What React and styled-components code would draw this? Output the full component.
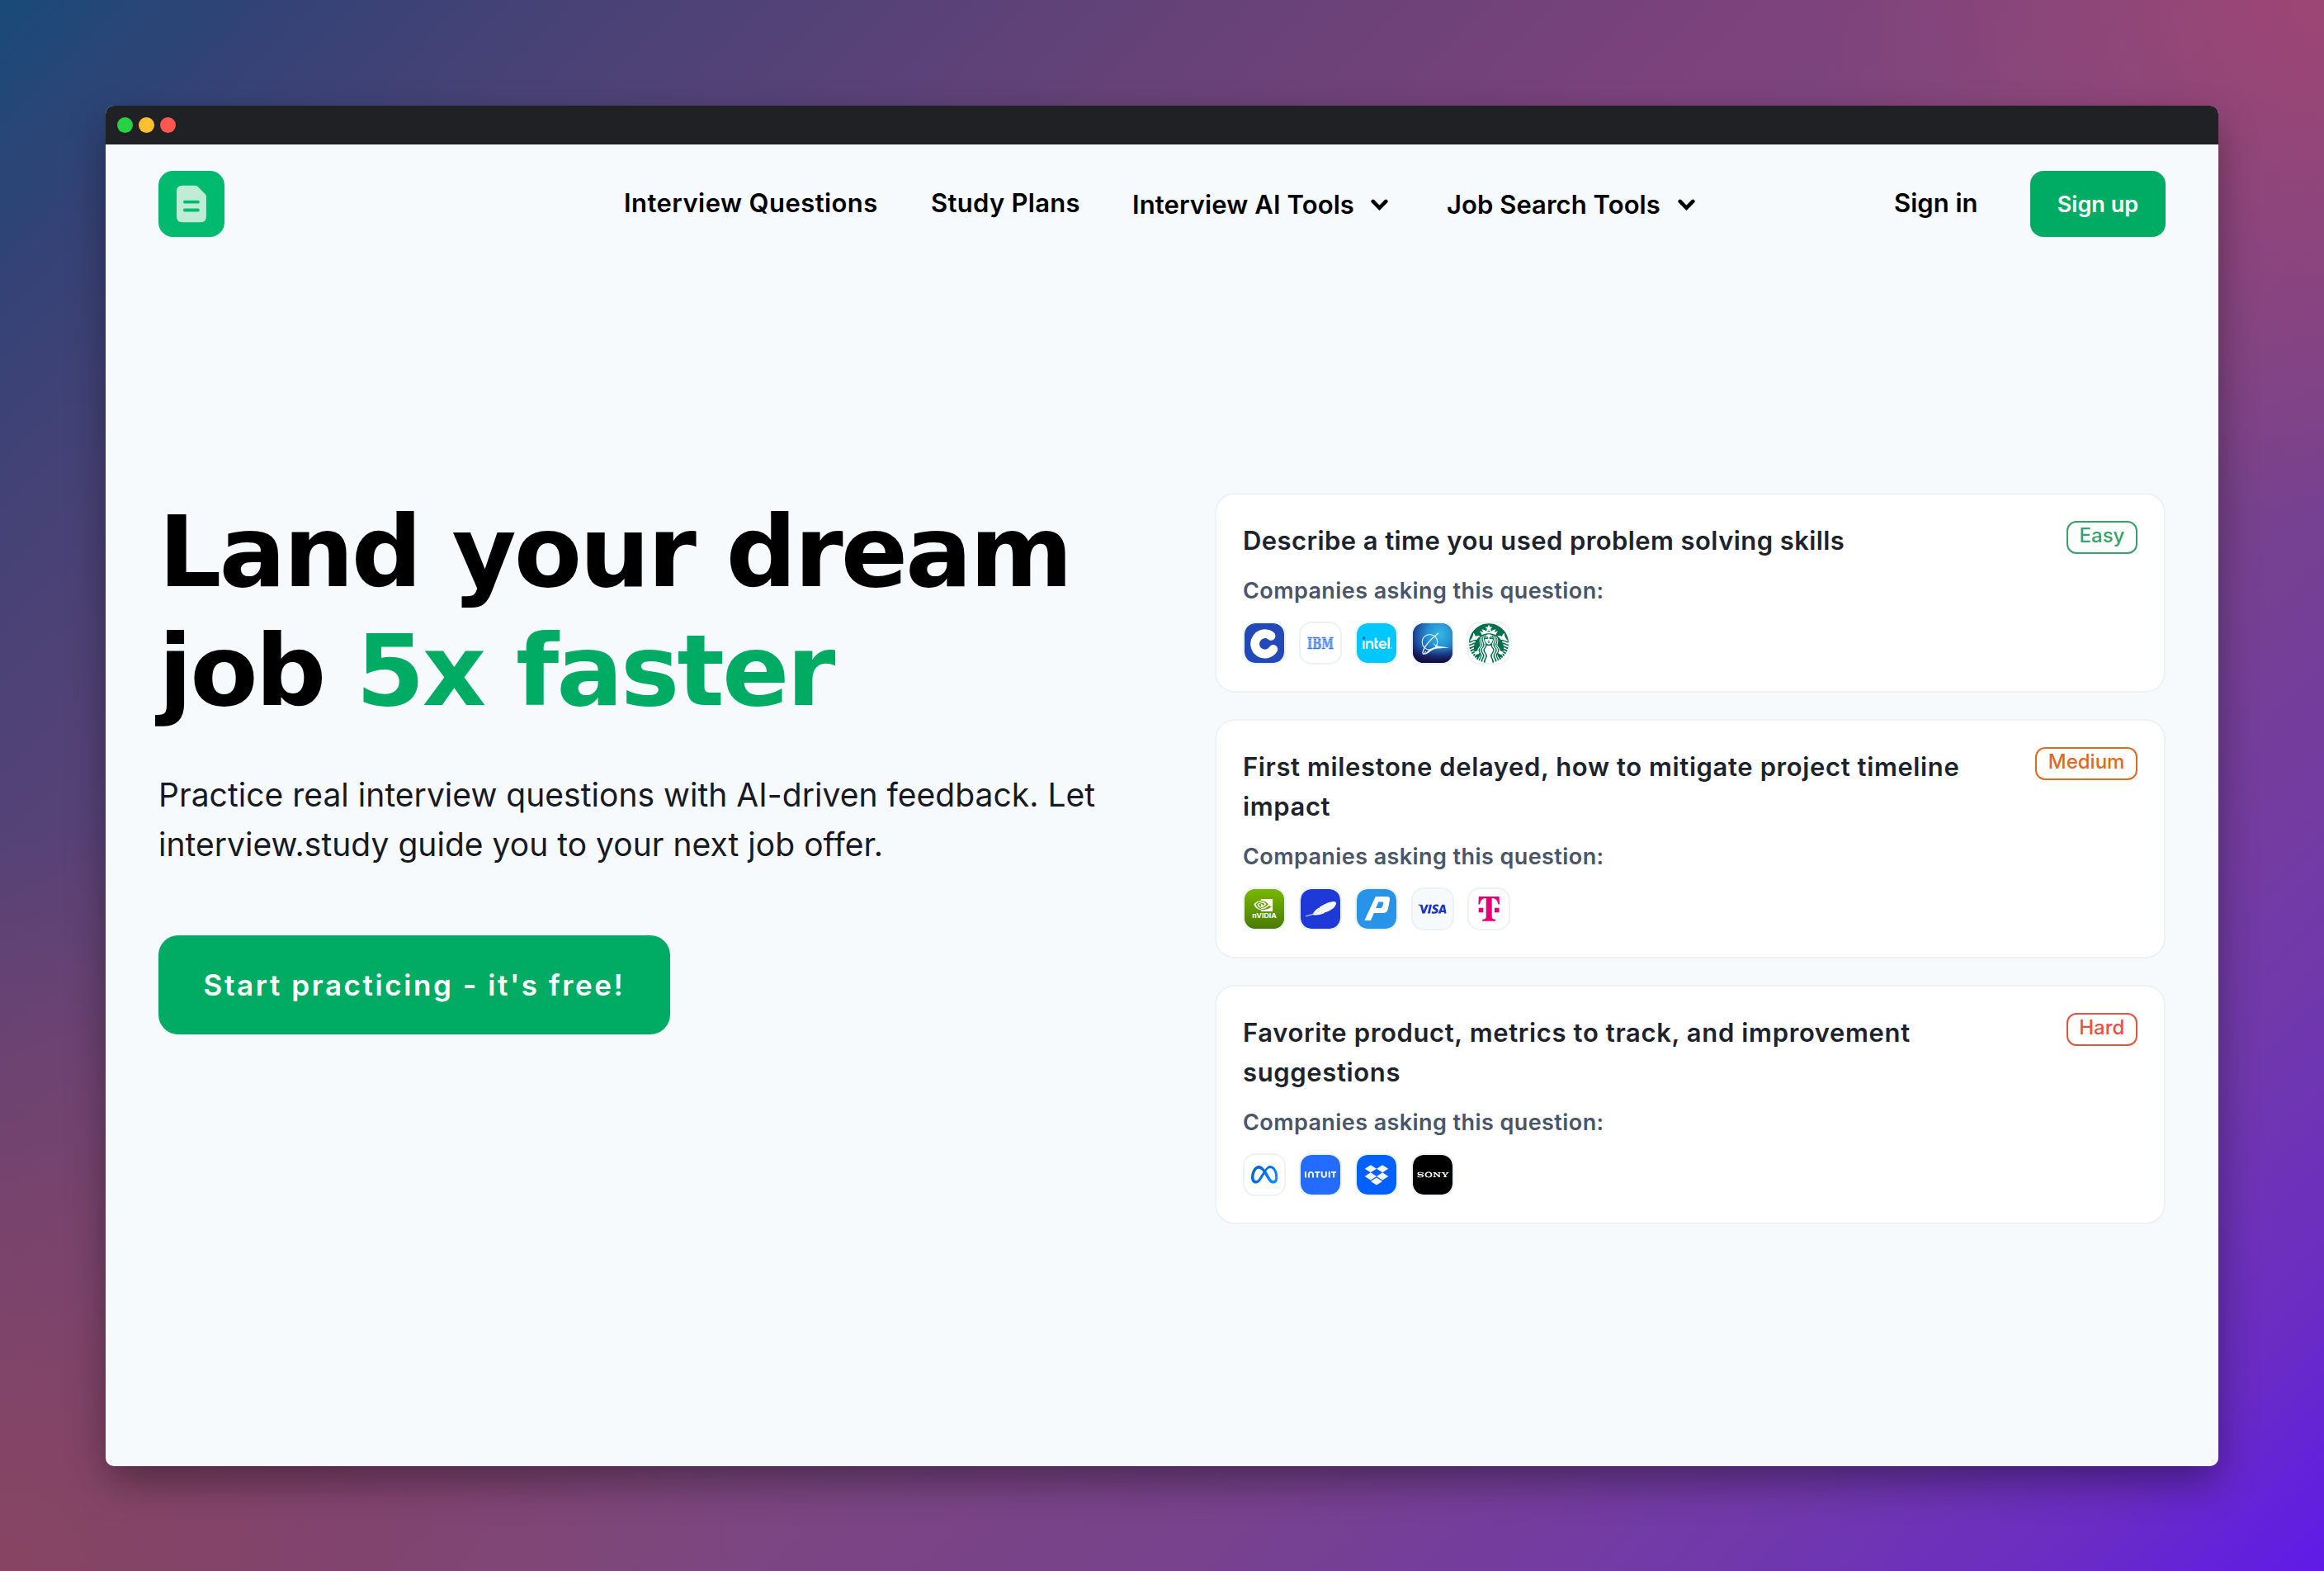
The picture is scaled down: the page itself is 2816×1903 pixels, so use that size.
import React from "react";
import styled, { createGlobalStyle } from "styled-components";
import {
  SiIntel,
  SiStarbucks,
  SiNvidia,
  SiVisa,
  SiMeta,
  SiIntuit,
  SiDropbox,
  SiSony,
} from "react-icons/si";

const GlobalStyle = createGlobalStyle`
  *, *::before, *::after { box-sizing: border-box; }
  body {
    margin: 0;
    font-family: "Inter", "Liberation Sans", sans-serif;
    color: #000;
  }
  h1, h2, p { margin: 0; }
  svg { display: block; }
`;

const Backdrop = styled.div`
  height: 1903px;
  padding: 128px;
  background:
    radial-gradient(circle at 100% 0%, #9d4674 0%, rgba(157, 70, 116, 0) 620px),
    radial-gradient(circle at 0% 100%, #874562 0%, rgba(135, 69, 98, 0) 900px),
    linear-gradient(
      135deg,
      #194a78 0%,
      #364276 8%,
      #484276 15%,
      #644278 30%,
      #7c427c 45%,
      #7c477e 55%,
      #78428c 70%,
      #7038ac 85%,
      #6a2cc4 93%,
      #5f1ae9 100%
    );
`;

const Window = styled.div`
  display: flex;
  flex-direction: column;
  height: 1648px;
  border-radius: 10px;
  overflow: hidden;
  background: #f6fafd;
  box-shadow: 0 20px 50px -4px rgba(0, 0, 0, 0.42);
`;

const TitleBar = styled.div`
  display: flex;
  align-items: center;
  gap: 7px;
  height: 47px;
  padding-left: 14px;
  background: #202124;
`;

const Dot = styled.span`
  width: 19px;
  height: 19px;
  border-radius: 50%;
  background: ${(p) => p.$color};
`;

const Header = styled.header`
  display: flex;
  align-items: center;
  height: 144px;
  padding: 0 64px;
`;

const Brand = styled.a`
  width: 564px;
`;

const Nav = styled.nav`
  display: flex;
  align-items: center;
  gap: 64px;
`;

const NavLink = styled.a`
  width: ${(p) => p.$width}px;
  padding-bottom: 2px;
  font-size: 31px;
  font-weight: 600;
  line-height: 48px;
  letter-spacing: ${(p) => p.$track}px;
  white-space: nowrap;
`;

const NavMenu = styled(NavLink)`
  display: flex;
  align-items: center;
  justify-content: space-between;
  padding: 1px 7px 0 0;
`;

const Account = styled.div`
  display: flex;
  align-items: center;
  gap: 64px;
  margin-left: auto;
`;

const SignUp = styled.button`
  width: 164px;
  height: 80px;
  padding: 0;
  border: 0;
  border-radius: 16px;
  background: #00ac63;
  color: #fff;
  font: 600 27px "Inter", sans-serif;
  letter-spacing: 0.05px;
`;

const Hero = styled.main`
  display: grid;
  grid-template-columns: 1152px 1152px;
  gap: 128px;
  align-items: start;
  padding: 278px 64px 0;
`;

const Headline = styled.h1`
  font: bold 120px/144px "DejaVu Sans", sans-serif;
  letter-spacing: -3px;
`;

const Accent = styled.span`
  color: #00ac63;
`;

const Lead = styled.p`
  margin-top: 48px;
  color: #171923;
  font-size: 39px;
  line-height: 60px;
  letter-spacing: 0.03px;
`;

const CallToAction = styled.button`
  width: 620px;
  height: 120px;
  margin-top: 80px;
  padding: 0;
  border: 0;
  border-radius: 24px;
  background: #00ac63;
  color: #fff;
  font: 600 35px "Inter", sans-serif;
  letter-spacing: 2.6px;
`;

const Questions = styled.section`
  display: flex;
  flex-direction: column;
  gap: 32px;
`;

const Card = styled.article`
  display: flex;
  align-items: flex-start;
  justify-content: space-between;
  padding: 32px;
  border: 2px solid #edf2f7;
  border-radius: 24px;
  background: #fff;
`;

const Question = styled.h2`
  color: #1d232d;
  font-size: 31px;
  font-weight: 600;
  line-height: 48px;
  letter-spacing: ${(p) => p.$track}px;
`;

const Asking = styled.p`
  margin: 16px 0;
  color: #4a5568;
  font-size: 27px;
  font-weight: 600;
  line-height: 42px;
  letter-spacing: 0.42px;
`;

const Companies = styled.div`
  display: flex;
  gap: 16px;
`;

const Tile = styled.div`
  width: 52px;
  height: 52px;
  border: 2px solid #edf2f7;
  border-radius: 15px;
  overflow: hidden;
  background: ${(p) => p.$bg};
  background-clip: padding-box;
`;

const Badge = styled.span`
  height: 40px;
  padding: 0 13.6px;
  border: 2px solid ${(p) => p.$color};
  border-radius: 12px;
  color: ${(p) => p.$color};
  font-size: 24px;
  font-weight: 500;
  line-height: 31px;
`;

function Logo() {
  return (
    <svg width="80" height="80" viewBox="0 0 80 80">
      <rect width="80" height="80" rx="17.5" fill="#00bb6f" />
      <path
        d="M29 17.8h15.5q2 0 3.4 1.4l8.6 8.8q1.4 1.4 1.4 3.4V55.3q0 7-7 7H29q-7 0-7-7V24.8q0-7 7-7z"
        fill="#bfecd5"
      />
      <path d="M31.9 37.7H47.9M31.9 47.5H47.9" stroke="#00bb6f" strokeWidth="3.8" strokeLinecap="round" />
    </svg>
  );
}

function Chevron() {
  return (
    <svg width="21" height="14" viewBox="0 0 21 14">
      <path d="M2.7 2.9l7.8 7.9 7.8-7.9" fill="none" stroke="#000" strokeWidth="4.6" strokeLinecap="round" />
    </svg>
  );
}

const C = () => (
  <path d="M32 15.3A12 12.2 0 1 0 34.8 31.4" fill="none" stroke="#fff" strokeWidth="10.8" strokeLinecap="round" />
);

const Ibm = () => (
  <>
    <text x="24" y="20.9" transform="scale(1 1.46)" textAnchor="middle" fontFamily="DejaVu Serif" fontWeight="bold" fontSize="13.2" fill="#3a76e0" stroke="#3a76e0" strokeWidth=".5">
      IBM
    </text>
    <path d="M7 18.6h34M7 20.7h34M7 22.8h34M7 24.9h34M7 27h34M7 29.1h34" stroke="#fff" strokeWidth=".5" />
  </>
);

const Intel = () => (
  <>
    <SiIntel x="7" y="6" size="36" color="#fff" />
    <path d="M7 16.6h3.2v3.2H7z" fill="#0068b5" />
  </>
);

const Boeing = () => (
  <>
    <defs>
      <radialGradient id="sky" cx=".68" cy=".28" r=".85">
        <stop offset="0" stopColor="#35b8e6" />
        <stop offset=".38" stopColor="#2590d0" />
        <stop offset=".7" stopColor="#1f4fa2" />
        <stop offset="1" stopColor="#15144e" />
      </radialGradient>
      <linearGradient id="dusk" x1="0" y1="0" x2="0" y2="1">
        <stop offset=".6" stopColor="#14104a" stopOpacity="0" />
        <stop offset="1" stopColor="#120c40" />
      </linearGradient>
    </defs>
    <rect width="48" height="48" fill="url(#sky)" />
    <rect width="48" height="48" fill="url(#dusk)" />
    <g fill="none" stroke="#e6f4fb" strokeLinecap="round">
      <circle cx="20.5" cy="22.8" r="9.3" strokeWidth="1.1" />
      <path d="M30.5 12.3C22 18.5 13 28.5 12 35.3c-.4 2.7 2.3 2.3 3.5-1" strokeWidth="1.3" />
    </g>
    <path d="M13 37.8c3.5-.6 4.2-5.5 12-8.2l3-1.1-3.8-4.8c2.5 1.7 4.2 3.6 6.8 4.1l13 1.8-14.5 1c-8.5 1-10.5 7.6-16.5 7.2z" fill="#f2fafd" />
  </>
);

const Starbucks = () => <SiStarbucks size="48" color="#00704a" />;

const Nvidia = () => (
  <>
    <defs>
      <linearGradient id="moss" x1="0" y1="0" x2="0" y2="1">
        <stop offset="0" stopColor="#78b800" />
        <stop offset="1" stopColor="#4b7a00" />
      </linearGradient>
    </defs>
    <rect width="48" height="48" fill="url(#moss)" />
    <SiNvidia x="11.3" y="8" size="23" color="#fff" />
    <text x="9.3" y="35.4" fontFamily="Inter" fontWeight="700" fontSize="8" fill="#fff" textLength="29.5" lengthAdjust="spacingAndGlyphs">
      nVIDIA
    </text>
  </>
);

const Feather = () => (
  <>
    <path
      d="M14.5 31c1.2-3.6 4-6.3 7.4-8.6l.6.7.7-1.6c5-3.3 11-6.3 17.3-6.6 2 0 2.9 1.3 2.3 3.4-.7 2.6-2.6 4.6-4.9 6.1l-1.5.1.4.8c-2 1.2-4.3 2.1-6.5 3l-1.3-.2v.9c-4.6 1.7-9.5 3.4-14.5 2z"
      fill="#f6f8ff"
    />
    <path d="M6.5 32.8C12 31.8 17 30 23 26.5" fill="none" stroke="#dfe5ff" strokeWidth="1.1" strokeLinecap="round" />
  </>
);

const Parking = () => (
  <path
    fillRule="evenodd"
    fill="#fff"
    d="M22.8 9H36.5q4.3 0 3.5 4L38 23.5Q36.9 29 31.5 29H20.8L17.6 36.8Q17.1 38 15.8 38H9.3ZM26.3 15.5 23.2 23H28.5Q30.5 23 31 21.2L32.3 17.2Q32.7 15.5 31 15.5Z"
  />
);

const Visa = () => <SiVisa x="5.7" y="6.6" size="35" color="#1c36cc" />;

const Telekom = () => (
  <path
    fill="#e20074"
    d="M11.8 9H36.6L37 18.6H35.4Q34.6 11 27.7 11V34Q27.7 36.5 32 36.7V38.7H16.3V36.7Q20.7 36.5 20.7 34V11Q13.8 11 13 18.6H11.4ZM11.7 22.7h5.6v5.6h-5.6ZM31 22.7h5.6v5.6H31Z"
  />
);

const Meta = () => (
  <>
    <defs>
      <linearGradient id="loop" x1="0" y1="0" x2="1" y2=".6">
        <stop offset="0" stopColor="#0064d8" />
        <stop offset=".5" stopColor="#0b6de2" />
        <stop offset="1" stopColor="#0a8bff" />
      </linearGradient>
    </defs>
    <SiMeta x="8" y="7.7" size="32.3" style={{ fill: "url(#loop)" }} />
  </>
);

const Intuit = () => <SiIntuit x="5" y="4.6" size="38.4" color="#fff" />;

const Dropbox = () => <SiDropbox x="9.7" y="10.1" size="28.6" color="#f5f3f0" />;

const Sony = () => <SiSony x="5.3" y="4.8" size="38.4" color="#fff" />;

const questions = [
  {
    title: "Describe a time you used problem solving skills",
    track: 0.415,
    level: "Easy",
    color: "#38a169",
    companies: [
      ["#2348b8", C],
      ["#fff", Ibm],
      ["#00c7fd", Intel],
      ["#1f4fa2", Boeing],
      ["#fff", Starbucks],
    ],
  },
  {
    title: (
      <>
        First milestone delayed, how to mitigate project timeline
        <br />
        impact
      </>
    ),
    track: 0.61,
    level: "Medium",
    color: "#dd6b20",
    companies: [
      ["#5f9800", Nvidia],
      ["#1f38d8", Feather],
      ["#2793e9", Parking],
      ["#f7fafc", Visa],
      ["#fff", Telekom],
    ],
  },
  {
    title: (
      <>
        Favorite product, metrics to track, and improvement
        <br />
        suggestions
      </>
    ),
    track: 0.64,
    level: "Hard",
    color: "#e5533f",
    companies: [
      ["#fff", Meta],
      ["#236cff", Intuit],
      ["#0061ff", Dropbox],
      ["#000", Sony],
    ],
  },
];

function QuestionCard({ title, track, level, color, companies }) {
  return (
    <Card>
      <div>
        <Question $track={track}>{title}</Question>
        <Asking>Companies asking this question:</Asking>
        <Companies>
          {companies.map(([bg, Mark], i) => (
            <Tile key={i} $bg={bg}>
              <svg width="48" height="48" viewBox="0 0 48 48">
                <Mark />
              </svg>
            </Tile>
          ))}
        </Companies>
      </div>
      <Badge $color={color}>{level}</Badge>
    </Card>
  );
}

export default function App() {
  return (
    <>
      <GlobalStyle />
      <Backdrop>
        <Window>
          <TitleBar>
            <Dot $color="#28d043" />
            <Dot $color="#ffbf2f" />
            <Dot $color="#ff564f" />
          </TitleBar>
          <Header>
            <Brand>
              <Logo />
            </Brand>
            <Nav>
              <NavLink $width={308} $track={0.43}>Interview Questions</NavLink>
              <NavLink $width={180} $track={0.3}>Study Plans</NavLink>
              <NavMenu $width={317} $track={0.1}>
                Interview AI Tools
                <Chevron />
              </NavMenu>
              <NavMenu $width={308} $track={0.05}>
                Job Search Tools
                <Chevron />
              </NavMenu>
            </Nav>
            <Account>
              <NavLink $width={101} $track={0}>Sign in</NavLink>
              <SignUp>Sign up</SignUp>
            </Account>
          </Header>
          <Hero>
            <div>
              <Headline>
                Land your dream
                <br />
                job <Accent>5x faster</Accent>
              </Headline>
              <Lead>
                Practice real interview questions with AI-driven feedback. Let
                <br />
                interview.study guide you to your next job offer.
              </Lead>
              <CallToAction>Start practicing - it's free!</CallToAction>
            </div>
            <Questions>
              {questions.map((q) => (
                <QuestionCard key={q.level} {...q} />
              ))}
            </Questions>
          </Hero>
        </Window>
      </Backdrop>
    </>
  );
}
